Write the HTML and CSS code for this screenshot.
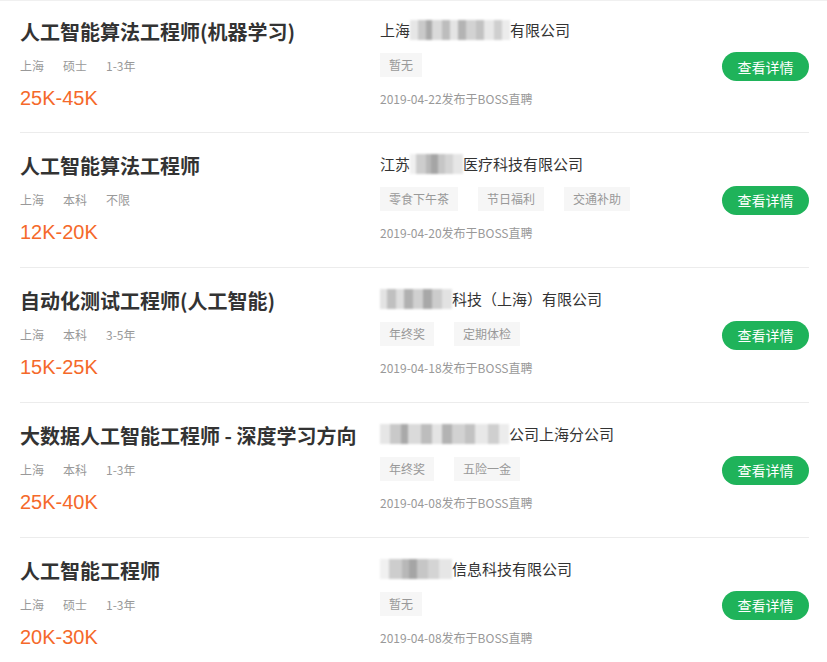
FILE: index.html
```html
<!DOCTYPE html>
<html lang="zh-CN">
<head>
  <meta charset="UTF-8" />
  <meta name="viewport" content="width=device-width, initial-scale=1.0" />
  <title>职位列表</title>
  <link rel="stylesheet" href="styles.css">
</head>

<body>

  <ul class="job-list">
    <li class="job">
      <div class="job-main">
        <h3 class="job-title">人工智能算法工程师(机器学习)</h3>
        <p class="job-meta"><span>上海</span><span>硕士</span><span>1-3年</span></p>
        <p class="job-salary">25K-45K</p>
      </div>
      <div class="job-company">
        <p class="company-name">上海<span class="mask mask-a" style="width: 100px"></span>有限公司</p>
        <div class="tags"><span class="tag">暂无</span></div>
        <p class="job-date">2019-04-22发布于BOSS直聘</p>
      </div>
      <button class="detail-btn">查看详情</button>
    </li>

    <li class="job">
      <div class="job-main">
        <h3 class="job-title">人工智能算法工程师</h3>
        <p class="job-meta"><span>上海</span><span>本科</span><span>不限</span></p>
        <p class="job-salary">12K-20K</p>
      </div>
      <div class="job-company">
        <p class="company-name">江苏<span class="mask mask-b" style="width: 53px"></span>医疗科技有限公司</p>
        <div class="tags">
          <span class="tag">零食下午茶</span>
          <span class="tag">节日福利</span>
          <span class="tag">交通补助</span>
        </div>
        <p class="job-date">2019-04-20发布于BOSS直聘</p>
      </div>
      <button class="detail-btn">查看详情</button>
    </li>

    <li class="job">
      <div class="job-main">
        <h3 class="job-title">自动化测试工程师(人工智能)</h3>
        <p class="job-meta"><span>上海</span><span>本科</span><span>3-5年</span></p>
        <p class="job-salary">15K-25K</p>
      </div>
      <div class="job-company">
        <p class="company-name"><span class="mask mask-c" style="width: 72px"></span>科技（上海）有限公司</p>
        <div class="tags">
          <span class="tag">年终奖</span>
          <span class="tag">定期体检</span>
        </div>
        <p class="job-date">2019-04-18发布于BOSS直聘</p>
      </div>
      <button class="detail-btn">查看详情</button>
    </li>

    <li class="job">
      <div class="job-main">
        <h3 class="job-title">大数据人工智能工程师 - 深度学习方向</h3>
        <p class="job-meta"><span>上海</span><span>本科</span><span>1-3年</span></p>
        <p class="job-salary">25K-40K</p>
      </div>
      <div class="job-company">
        <p class="company-name"><span class="mask mask-a" style="width: 129px"></span>公司上海分公司</p>
        <div class="tags">
          <span class="tag">年终奖</span>
          <span class="tag">五险一金</span>
        </div>
        <p class="job-date">2019-04-08发布于BOSS直聘</p>
      </div>
      <button class="detail-btn">查看详情</button>
    </li>

    <li class="job">
      <div class="job-main">
        <h3 class="job-title">人工智能工程师</h3>
        <p class="job-meta"><span>上海</span><span>硕士</span><span>1-3年</span></p>
        <p class="job-salary">20K-30K</p>
      </div>
      <div class="job-company">
        <p class="company-name"><span class="mask mask-b" style="width: 72px"></span>信息科技有限公司</p>
        <div class="tags"><span class="tag">暂无</span></div>
        <p class="job-date">2019-04-08发布于BOSS直聘</p>
      </div>
      <button class="detail-btn">查看详情</button>
    </li>
  </ul>

</body>
</html>
```

FILE: styles.css
```css
body {
  margin: 0;
  padding: 0;
  background: #fff;
  font-family: 'Liberation Sans', 'Noto Sans CJK SC', sans-serif;
  color: #333;
}

.job-list {
  list-style: none;
  margin: 0;
  padding: 0 18px 0 20px;
  border-top: 1px solid #f0f0f0;
}

.job {
  display: flex;
  align-items: center;
  height: 134px;
  border-bottom: 1px solid #ececec;
}

.job:first-child {
  height: 131px;
}

.job-main,
.job-company {
  align-self: flex-start;
  padding-top: 16px;
}

.job:first-child .job-main,
.job:first-child .job-company {
  padding-top: 14px;
}

.job-main {
  width: 360px;
}

.job-company {
  flex: 1;
}

.job p {
  margin: 0;
}

.job-title {
  margin: 0;
  font-family: 'Noto Sans CJK SC', sans-serif;
  font-size: 20px;
  font-weight: bold;
  line-height: 34px;
  color: #333;
  white-space: nowrap;
}

.job-meta {
  font-family: 'Noto Sans CJK SC', sans-serif;
  font-size: 12px;
  line-height: 33px;
  color: #999;
}

.job-meta span {
  margin-right: 19px;
}

.job-salary {
  font-size: 20px;
  line-height: 33px;
  color: #f5692a;
}

.company-name {
  font-family: 'Noto Sans CJK SC', sans-serif;
  font-size: 15px;
  line-height: 30px;
  color: #333;
  display: flex;
  align-items: center;
}

/* blurred part of the company name */
.mask {
  display: inline-block;
  height: 20px;
  filter: blur(1.2px);
}

.mask-a {
  background: linear-gradient(90deg, #e6e6e6 0 8%, #c9c9c9 8% 16%, #a9a9a9 16% 22%, #dadada 22% 32%, #bdbdbd 32% 40%, #e4e4e4 40% 48%, #b3b3b3 48% 56%, #d2d2d2 56% 66%, #c2c2c2 66% 74%, #e8e8e8 74% 84%, #cfcfcf 84% 92%, #ececec 92% 100%);
}

.mask-b {
  background: linear-gradient(90deg, #f0f0f0 0 12%, #cdcdcd 12% 30%, #b8b8b8 30% 40%, #a5a5a5 40% 52%, #c6c6c6 52% 66%, #d4d4d4 66% 82%, #e6e6e6 82% 100%);
}

.mask-c {
  background: linear-gradient(90deg, #e3e3e3 0 10%, #c0c0c0 10% 22%, #dedede 22% 34%, #b1b1b1 34% 46%, #d0d0d0 46% 60%, #a8a8a8 60% 72%, #cccccc 72% 86%, #e2e2e2 86% 100%);
}

.tags {
  height: 40px;
  display: flex;
  align-items: center;
  gap: 20px;
}

.tag {
  font-family: 'Noto Sans CJK SC', sans-serif;
  font-size: 12px;
  line-height: 24px;
  padding: 0 9px;
  background: #f6f6f6;
  color: #999;
}

.job-date {
  font-family: 'Noto Sans CJK SC', sans-serif;
  font-size: 12px;
  line-height: 28px;
  color: #999;
}

.detail-btn {
  width: 87px;
  height: 29px;
  padding: 0;
  border: none;
  border-radius: 15px;
  background: #1fb35a;
  color: #fff;
  font-family: 'Noto Sans CJK SC', sans-serif;
  font-size: 14px;
  cursor: pointer;
}
```
